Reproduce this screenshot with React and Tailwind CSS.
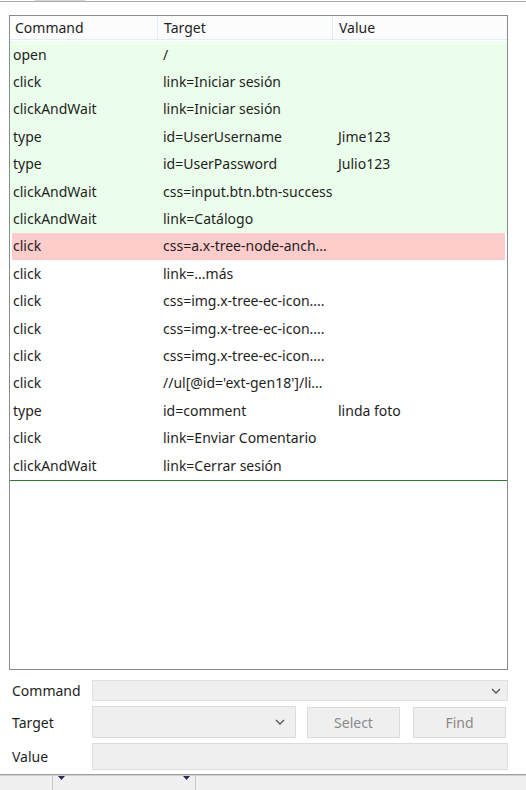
import React from 'react';

// Selenium IDE style command table
const rows = [
  { cmd: 'open', target: '/', value: '', status: 'ok' },
  { cmd: 'click', target: 'link=Iniciar sesión', value: '', status: 'ok' },
  { cmd: 'clickAndWait', target: 'link=Iniciar sesión', value: '', status: 'ok' },
  { cmd: 'type', target: 'id=UserUsername', value: 'Jime123', status: 'ok' },
  { cmd: 'type', target: 'id=UserPassword', value: 'Julio123', status: 'ok' },
  { cmd: 'clickAndWait', target: 'css=input.btn.btn-success', value: '', status: 'ok' },
  { cmd: 'clickAndWait', target: 'link=Catálogo', value: '', status: 'ok' },
  { cmd: 'click', target: 'css=a.x-tree-node-anch...', value: '', status: 'fail' },
  { cmd: 'click', target: 'link=...más', value: '', status: '' },
  { cmd: 'click', target: 'css=img.x-tree-ec-icon....', value: '', status: '' },
  { cmd: 'click', target: 'css=img.x-tree-ec-icon....', value: '', status: '' },
  { cmd: 'click', target: 'css=img.x-tree-ec-icon....', value: '', status: '' },
  { cmd: 'click', target: "//ul[@id='ext-gen18']/li...", value: '', status: '' },
  { cmd: 'type', target: 'id=comment', value: 'linda foto', status: '' },
  { cmd: 'click', target: 'link=Enviar Comentario', value: '', status: '' },
  { cmd: 'clickAndWait', target: 'link=Cerrar sesión', value: '', status: '' },
];

function Chevron() {
  return (
    <svg width="10" height="6" viewBox="0 0 10 6" fill="none" stroke="#555" strokeWidth="1.3">
      <path d="M1 1l4 4 4-4" />
    </svg>
  );
}

function Marker() {
  return (
    <svg width="7" height="4" viewBox="0 0 7 4">
      <path d="M0 0h7L3.5 4z" fill="#2a2a5a" />
    </svg>
  );
}

export default function App() {
  return (
    <div className="w-[526px] h-[790px] bg-white flex flex-col text-[14px] text-[#1e1e1e] font-['Noto_Sans',sans-serif] overflow-hidden">
      {/* top tab strip */}
      <div className="h-[15px] flex flex-col">
        <div className="h-[1px] flex">
          <div className="w-[35px]" />
          <div className="w-[50px] bg-[#d8d8d8]" />
        </div>
        <div className="h-[1px] bg-[#a8a8a8]" />
      </div>

      {/* command table */}
      <div className="mx-[9px] w-[499px] h-[655px] border border-[#868a91] flex flex-col">
        <div className="h-[24px] bg-[#fcfcfc] border-b border-[#e3ecf9] flex items-center leading-none">
          <div className="w-[148px] h-full border-r border-[#e3ecf9] pl-[5px] flex items-center pt-[1px]">Command</div>
          <div className="w-[175px] h-full border-r border-[#e3ecf9] pl-[6px] flex items-center pt-[1px]">Target</div>
          <div className="flex-1 pl-[6px] pt-[1px]">Value</div>
        </div>
        <div className="flex flex-col pt-[1px]">
          {rows.map((r, i) => (
            <div
              key={i}
              className={`h-[27.4px] flex items-center leading-none ${
                r.status === 'ok' ? 'bg-[#ebfeeb]' : r.status === 'fail' ? 'bg-[#ffcccc] mx-[2px]' : ''
              }`}
            >
              <div className={r.status === 'fail' ? 'w-[151px] pl-[1px]' : 'w-[153px] pl-[3px]'}>{r.cmd}</div>
              <div className="w-[175px]">{r.target}</div>
              <div className="flex-1">{r.value}</div>
            </div>
          ))}
        </div>
        <div className="h-[1px] bg-[#2e7d2e] mt-[1px]" />
        <div className="flex-1" />
      </div>

      {/* editor form */}
      <div className="pl-[12px] pr-[18px] pt-[10px] flex flex-col gap-[5px]">
        <div className="flex items-center h-[21px]">
          <div className="w-[80px]">Command</div>
          <div className="flex-1 h-[21px] bg-[#efefef] border border-[#e0e0e0] flex items-center justify-end pr-[6px]">
            <Chevron />
          </div>
        </div>
        <div className="flex items-center h-[32px]">
          <div className="w-[80px]">Target</div>
          <div className="w-[204px] h-[32px] bg-[#efefef] border border-[#dcdcdc] flex items-center justify-end pr-[10px]">
            <Chevron />
          </div>
          <div className="w-[93px] h-[31px] ml-[11px] bg-[#efefef] border border-[#dcdcdc] flex items-center justify-center text-[#8a8a8a]">Select</div>
          <div className="w-[93px] h-[31px] ml-[13px] bg-[#efefef] border border-[#dcdcdc] flex items-center justify-center text-[#8a8a8a]">Find</div>
        </div>
        <div className="flex items-center h-[27px]">
          <div className="w-[80px]">Value</div>
          <div className="flex-1 h-[27px] bg-[#efefef] border border-[#dcdcdc]" />
        </div>
      </div>

      {/* bottom strip */}
      <div className="mt-auto h-[16px] flex flex-col">
        <div className="h-[1px] bg-[#a0a0a0]" />
        <div className="h-[1px] bg-[#cfcfcf]" />
        <div className="flex-1 bg-[#f0f0f0] flex items-start">
          <div className="w-[53px] h-full border-r border-[#c8c8c8]" />
          <div className="w-[143px] h-full border-r border-[#c8c8c8] flex justify-between px-[5px]">
            <Marker />
            <Marker />
          </div>
        </div>
      </div>
    </div>
  );
}
